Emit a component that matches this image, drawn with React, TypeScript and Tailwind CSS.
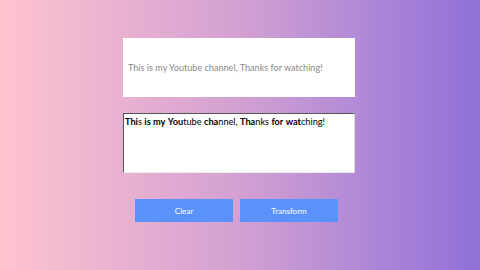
import React from 'react';

const words: [string, string][] = [
  ['Thi', 's'],
  ['is', ''],
  ['my', ''],
  ['You', 'tube'],
  ['cha', 'nnel,'],
  ['Tha', 'nks'],
  ['for', ''],
  ['wat', 'ching!'],
];

export default function App() {
  return (
    <div
      className="w-[480px] h-[270px] bg-gradient-to-r from-[#ffc3cf] via-[#d3a0d2] to-[#9070d8] flex flex-col items-center pt-[38px]"
      style={{ fontFamily: 'Lato, "Noto Sans", sans-serif' }}
    >
      <div className="ml-[-2px] w-[232px] h-[59px] bg-white flex items-center px-[5px]">
        <span className="text-[9.1px] text-[#8a8a8a] whitespace-nowrap">
          This is my Youtube channel, Thanks for watching!
        </span>
      </div>

      <div className="ml-[-2px] mt-[16px] w-[232px] h-[60px] bg-white border border-[#555] border-r-[#ddd] border-b-[#eee] px-[1px] pt-[1px]">
        <p className="text-[9.2px] text-black leading-[13px] whitespace-nowrap">
          {words.map(([b, n], i) => (
            <span key={i}>
              <b className="font-bold">{b}</b>
              {n}
              {i < words.length - 1 ? ' ' : ''}
            </span>
          ))}
        </p>
      </div>

      <div className="mt-[26px] ml-[-7px] flex gap-[7px]">
        <button className="w-[98px] h-[23px] bg-[#5b92fa] text-white text-[8px]">Clear</button>
        <button className="w-[98px] h-[23px] bg-[#5b92fa] text-white text-[8px]">Transform</button>
      </div>
    </div>
  );
}
